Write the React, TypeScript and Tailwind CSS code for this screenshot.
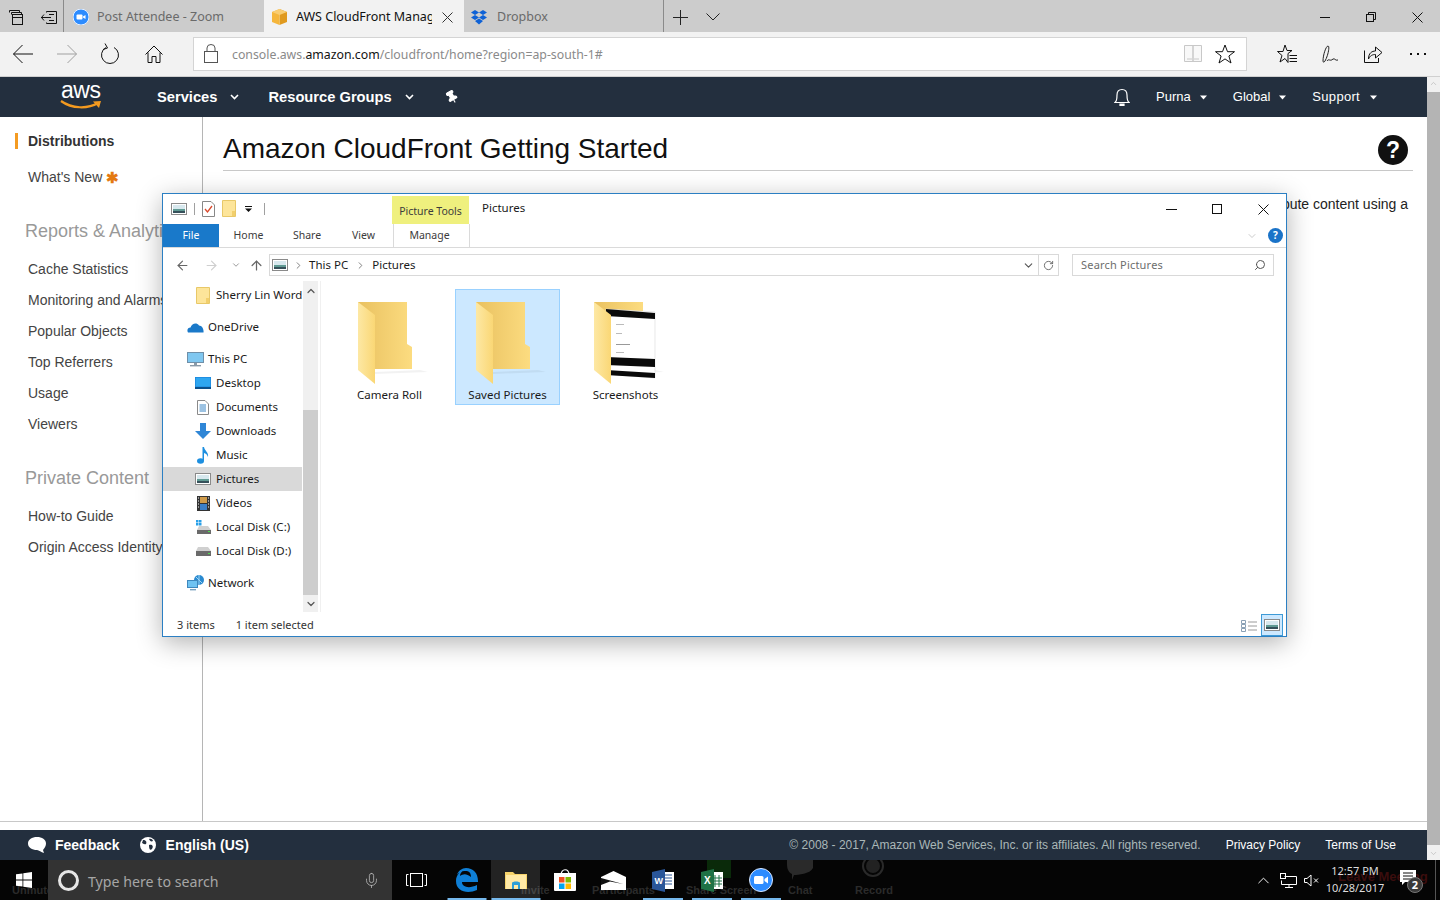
import React from "react";
import { ArrowLeft, ArrowRight, ArrowUp, RotateCw, ChevronDown, ChevronUp, ChevronRight, Search, Mic, Pin } from "lucide-react";

const seg = "font-['Noto_Sans','Open_Sans',sans-serif]";

function Cross({ s = 11, c = "#111" }: { s?: number; c?: string }) {
  return (
    <svg width={s} height={s} viewBox={`0 0 ${s} ${s}`} fill="none" stroke={c}><path d={`M0.5 0.5L${s - 0.5} ${s - 0.5}M${s - 0.5} 0.5L0.5 ${s - 0.5}`} /></svg>
  );
}

function Folder({ id, paper }: { id: string; paper?: boolean }) {
  return (
    <svg width="70" height="88" viewBox="0 0 70 88" className="block">
      <defs>
        <linearGradient id={id + "b"} x1="0" x2="1" y1="0" y2="0">
          <stop offset="0" stopColor="#e9c160" />
          <stop offset="1" stopColor="#fcdc80" />
        </linearGradient>
        <linearGradient id={id + "f"} x1="0" x2="1" y1="0" y2="0">
          <stop offset="0" stopColor="#fde8a4" />
          <stop offset="1" stopColor="#fad775" />
        </linearGradient>
      </defs>
      <polygon points="17,72 62,70 70,72 17,74" fill="#000" opacity="0.05" />
      {paper ? (
        <polygon points="0,2 49,2 49,12 0,12" fill={`url(#${id}b)`} />
      ) : (
        <polygon points="0,2 49,2 49,44 54,47 54,69 0,69" fill={`url(#${id}b)`} />
      )}
      {paper && (
        <g>
          <polygon points="12,9 61,12 61,78 12,74" fill="#fff" stroke="#d8d8d8" strokeWidth="0.6" />
          <polygon points="12,9 61,13 61,19 12,16" fill="#0a0a0a" />
          <polygon points="12,57 61,59 61,67 12,65" fill="#0a0a0a" />
          <polygon points="12,70 61,73 61,78 12,75" fill="#0a0a0a" />
          <rect x="22" y="24" width="8" height="1" fill="#bbb" />
          <rect x="22" y="33" width="6" height="1" fill="#bbb" />
          <rect x="22" y="44" width="14" height="1" fill="#999" />
          <rect x="22" y="52" width="8" height="1" fill="#bbb" />
        </g>
      )}
      <polygon points="0,2 17,15 17,84 0,70" fill={`url(#${id}f)`} />
    </svg>
  );
}

function PicIcon({ w = 16 }: { w?: number }) {
  return (
    <svg width={w} height="12" viewBox="0 0 16 12">
      <rect x="0.5" y="0.5" width="15" height="11" fill="#fff" stroke="#8a8a8a" />
      <rect x="2" y="2" width="12" height="4" fill="#d7e8ee" />
      <rect x="2" y="6" width="12" height="2" fill="#5f9a93" />
      <rect x="2" y="8" width="12" height="2" fill="#35505a" />
    </svg>
  );
}

function SmallFolder() {
  return (
    <svg width="14" height="17" viewBox="0 0 14 17">
      <path d="M0.5 0.5H13.5V16.5H0.5Z" fill="#fde59a" stroke="#e8c868" />
      <rect x="10" y="11" width="3" height="5" fill="#f2cf6c" />
    </svg>
  );
}

function NavIcon({ kind }: { kind: string }) {
  switch (kind) {
    case "folder":
      return <SmallFolder />;
    case "cloud":
      return (
        <svg width="17" height="11" viewBox="0 0 17 11">
          <path d="M1 10.5C-0.5 8 1 5.5 3.5 5.5C5 1.5 9.5 0 12 3.5C15 3.5 17 7 16.5 10.5Z" fill="#1a79c9" />
        </svg>
      );
    case "pc":
      return (
        <svg width="17" height="15" viewBox="0 0 17 15">
          <rect x="0.5" y="0.5" width="16" height="10" fill="#7fc7f0" stroke="#6f8fa8" />
          <rect x="7" y="11" width="3" height="2" fill="#8a9aa8" />
          <rect x="3" y="13" width="11" height="1.4" fill="#8a9aa8" />
        </svg>
      );
    case "desktop":
      return (
        <svg width="16" height="12" viewBox="0 0 16 12">
          <rect x="0" y="0" width="16" height="12" fill="#1a86dc" />
          <rect x="0.7" y="0.7" width="14.6" height="8.8" fill="#2ea6f0" />
          <rect x="0" y="10" width="16" height="2" fill="#0b4f8a" />
        </svg>
      );
    case "docs":
      return (
        <svg width="12" height="15" viewBox="0 0 12 15">
          <path d="M0.5 0.5H8L11.5 4V14.5H0.5Z" fill="#fff" stroke="#8a8a8a" />
          <path d="M2.5 5H9M2.5 7H9M2.5 9H9M2.5 11H9" stroke="#3b86c6" strokeWidth="1" />
        </svg>
      );
    case "down":
      return (
        <svg width="16" height="16" viewBox="0 0 16 16">
          <path d="M5 0H11V8H16L8 16L0 8H5Z" fill="#2f86d6" />
        </svg>
      );
    case "music":
      return (
        <svg width="12" height="17" viewBox="0 0 12 17">
          <ellipse cx="3.5" cy="14" rx="3.5" ry="2.8" fill="#1d8fe0" />
          <path d="M5.5 14V0H7C7.5 4 12 5 11 10C10 7 8.5 6.5 7 6V14Z" fill="#1d8fe0" />
        </svg>
      );
    case "pic":
      return <PicIcon />;
    case "video":
      return (
        <svg width="13" height="15" viewBox="0 0 13 15">
          <rect width="13" height="15" fill="#333" />
          <rect x="3" y="1" width="7" height="6" fill="#cf9b4a" />
          <rect x="3" y="8" width="7" height="6" fill="#3c7fc6" />
          <path d="M1 2H2M1 5H2M1 8H2M1 11H2M11 2H12M11 5H12M11 8H12M11 11H12" stroke="#fff" />
        </svg>
      );
    case "diskc":
      return (
        <svg width="15" height="14" viewBox="0 0 15 14">
          <rect x="0" y="0" width="2.5" height="2.5" fill="#29a0e8" />
          <rect x="3" y="0" width="2.5" height="2.5" fill="#29a0e8" />
          <rect x="0" y="3" width="2.5" height="2.5" fill="#29a0e8" />
          <rect x="3" y="3" width="2.5" height="2.5" fill="#29a0e8" />
          <path d="M3 6H12L15 10H1Z" fill="#d0d0d0" />
          <rect x="1" y="10" width="14" height="4" fill="#6a6a6a" />
          <rect x="12" y="11" width="2" height="1" fill="#4ee04e" />
        </svg>
      );
    case "diskd":
      return (
        <svg width="15" height="9" viewBox="0 0 15 9">
          <path d="M2 0H12L15 4H0Z" fill="#d0d0d0" />
          <rect x="0" y="4" width="15" height="5" fill="#6a6a6a" />
          <rect x="12" y="6" width="2" height="1" fill="#4ee04e" />
        </svg>
      );
    default:
      return (
        <svg width="17" height="16" viewBox="0 0 17 16">
          <circle cx="12" cy="5" r="5" fill="#2a8ad0" />
          <path d="M9 2L15 8M12 0V10" stroke="#9fd6f5" />
          <rect x="0.5" y="5.5" width="10" height="7" fill="#6fc3f2" stroke="#3f88bd" />
          <rect x="3" y="14" width="6" height="1.4" fill="#7aa3c0" />
        </svg>
      );
  }
}

function NavRow({ icon, label, indent, active }: { icon: string; label: string; indent?: boolean; active?: boolean }) {
  return (
    <div className={`h-6 mr-px flex items-center ${active ? "bg-[#d9d9d9]" : ""}`}>
      <div className={`flex justify-center shrink-0 ${indent ? "w-[50px] pl-[30px]" : "w-[42px] pl-[22px]"}`}>
        <NavIcon kind={icon} />
      </div>
      <span className="ml-[3px] text-[11.5px] whitespace-nowrap text-[#1a1a1a]">{label}</span>
    </div>
  );
}

function Tile({ label, selected, children }: { label: string; selected?: boolean; children: React.ReactNode }) {
  return (
    <div className={`w-[105px] h-[116px] border flex flex-col items-center ${selected ? "bg-[#cce8ff] border-[#99d1ff]" : "border-transparent"}`}>
      <div className="h-[90px] pt-[10px] w-full pl-[20px]">{children}</div>
      <span className="text-[11.5px] text-[#1a1a1a] mt-[6px] whitespace-nowrap">{label}</span>
    </div>
  );
}

function Explorer() {
  return (
    <div className={`${seg} absolute left-[162px] top-[193px] w-[1125px] h-[444px] bg-white border border-[#2b7fc3] shadow-[0_6px_24px_rgba(0,0,0,0.3)] flex flex-col`}>
      <div className="h-[30px] flex items-start relative">
        <div className="flex items-center gap-[7px] pl-[8px] pt-[6px] w-[229px]">
          <PicIcon />
          <div className="w-px h-[12px] bg-[#a0a0a0]" />
          <svg width="13" height="16" viewBox="0 0 13 16">
            <path d="M0.5 0.5H9L12.5 4V15.5H0.5Z" fill="#fff" stroke="#888" />
            <path d="M3 8L5.5 11L10 5" fill="none" stroke="#d9482b" strokeWidth="1.3" />
          </svg>
          <SmallFolder />
          <svg width="7" height="6" viewBox="0 0 7 6" className="ml-[2px]">
            <path d="M0 0H7V1H0ZM0 2.5H7L3.5 6Z" fill="#111" />
          </svg>
          <div className="w-px h-[12px] bg-[#a0a0a0] ml-[5px]" />
        </div>
        <div className="w-[77px] mt-[2px] bg-[#eff07e] h-[28px] flex items-center justify-center text-[10.5px] text-[#3c3c3c] pt-[3px]">Picture Tools</div>
        <div className="ml-[13px] mt-[5px] text-[11.5px] text-[#1a1a1a]">Pictures</div>
        <div className="ml-auto flex items-center">
          <div className="w-[46px] h-[30px] flex items-center justify-center"><div className="w-[11px] h-px bg-[#111]" /></div>
          <div className="w-[46px] h-[30px] flex items-center justify-center"><div className="w-[10px] h-[10px] border border-[#111]" /></div>
          <div className="w-[46px] h-[30px] flex items-center justify-center"><Cross s={11} /></div>
        </div>
      </div>
      <div className="h-[24px] flex items-stretch border-b border-[#dadada] text-[10.5px] text-[#3c3c3c]">
        <div className="w-[56px] bg-[#1979ca] text-white flex items-center justify-center">File</div>
        <div className="w-[57px] flex items-center justify-center ml-[1px]">Home</div>
        <div className="w-[60px] flex items-center justify-center">Share</div>
        <div className="w-[53px] flex items-center justify-center">View</div>
        <div className="w-[77px] ml-[3px] flex items-center justify-center border-x border-[#dadada] pr-[4px]">Manage</div>
        <div className="ml-auto flex items-center pr-[3px] gap-[10px]">
          <ChevronDown size={12} color="#a8a8a8" strokeWidth={1.2} />
          <div className="w-[15px] h-[15px] rounded-full bg-[#1a73c8] text-white text-[10px] font-bold flex items-center justify-center">?</div>
        </div>
      </div>
      <div className="h-[34px] flex items-center">
        <div className="w-[107px] flex items-center pl-[12px] shrink-0">
          <ArrowLeft size={15} color="#666" strokeWidth={1.8} />
          <ArrowRight size={15} color="#cfcfcf" strokeWidth={1.8} className="ml-[14px]" />
          <ChevronDown size={10} color="#888" strokeWidth={2} className="ml-[12px]" />
          <ArrowUp size={15} color="#666" strokeWidth={2} className="ml-[8px]" />
        </div>
        <div className="w-[790px] h-[22px] border border-[#d9d9d9] flex items-center pl-[2px] -ml-[1px] text-[#1a1a1a] text-[11.5px] shrink-0">
          <PicIcon />
          <ChevronRight size={11} color="#777" className="ml-[5px]" />
          <span className="ml-[5px]">This PC</span>
          <ChevronRight size={11} color="#777" className="ml-[7px]" />
          <span className="ml-[6px]">Pictures</span>
          <ChevronDown size={13} color="#555" className="ml-auto mr-[3px]" />
          <div className="w-px h-full bg-[#d9d9d9]" />
          <div className="w-[19px] flex justify-center"><RotateCw size={11} color="#666" /></div>
        </div>
        <div className="w-[202px] h-[22px] ml-[13px] border border-[#d9d9d9] flex items-center pl-[8px] pr-[7px] text-[11px] text-[#6d6d6d] shrink-0">
          <span className="tracking-[0.2px]">Search Pictures</span>
          <Search size={12} color="#555" className="ml-auto -scale-x-100" />
        </div>
      </div>
      <div className="flex-1 flex min-h-0">
        <div className="w-[140px] shrink-0 pt-px">
          <NavRow icon="folder" label="Sherry Lin Word" indent />
          <div className="h-2" />
          <NavRow icon="cloud" label="OneDrive" />
          <div className="h-2" />
          <NavRow icon="pc" label="This PC" />
          <NavRow icon="desktop" label="Desktop" indent />
          <NavRow icon="docs" label="Documents" indent />
          <NavRow icon="down" label="Downloads" indent />
          <NavRow icon="music" label="Music" indent />
          <NavRow icon="pic" label="Pictures" indent active />
          <NavRow icon="video" label="Videos" indent />
          <NavRow icon="diskc" label="Local Disk (C:)" indent />
          <NavRow icon="diskd" label="Local Disk (D:)" indent />
          <div className="h-2" />
          <NavRow icon="net" label="Network" />
        </div>
        <div className="w-[15px] h-[331px] bg-[#f0f0f0] flex flex-col items-center shrink-0 mt-[-1px]">
          <ChevronUp size={12} color="#555" strokeWidth={2.4} className="mt-[4px]" />
          <div className="w-full h-[185px] bg-[#cdcdcd] mt-[113px]" />
          <ChevronDown size={12} color="#555" strokeWidth={2.4} className="mt-[3px]" />
        </div>
        <div className="w-px h-[331px] bg-[#f0f0f0] ml-[2px] mt-[-1px]" />
        <div className="flex gap-[13px] pl-[16px] pt-[7px] items-start">
          <Tile label="Camera Roll"><Folder id="a" /></Tile>
          <Tile label="Saved Pictures" selected><Folder id="b" /></Tile>
          <Tile label="Screenshots"><Folder id="c" paper /></Tile>
        </div>
      </div>
      <div className="h-[22px] flex items-center text-[11px] text-[#333] pl-[14px]">
        <span>3 items</span>
        <span className="ml-[21px]">1 item selected</span>
        <div className="ml-auto flex items-center pr-[3px]">
          <svg width="17" height="13" viewBox="0 0 17 13" className="mr-[3px]">
            <path d="M0.5 1.5H4.5V4.5H0.5ZM0.5 5.5H4.5V8.5H0.5ZM0.5 9.5H4.5V12.5H0.5Z" fill="none" stroke="#8aa0b5" />
            <path d="M7 3H16M7 7H16M7 11H16" stroke="#9a9a9a" />
          </svg>
          <div className="w-[22px] h-[22px] bg-[#cce8ff] border border-[#3e9ad6] flex items-center justify-center"><PicIcon /></div>
        </div>
      </div>
    </div>
  );
}

const reports = ["Cache Statistics", "Monitoring and Alarms", "Popular Objects", "Top Referrers", "Usage", "Viewers"];

function Sidebar() {
  return (
    <div className="w-[203px] shrink-0 border-r border-[#b5b5b5] text-[14px] text-[#444] pt-[16px]">
      <div className="flex items-center h-[16px]">
        <div className="w-[3px] h-[16px] bg-[#f49b22] ml-[15px]" />
        <span className="ml-[10px] font-bold text-[#333]">Distributions</span>
      </div>
      <div className="pl-[28px] mt-[20px] h-[16px] flex items-center">
        What's New <span className="ml-[4px] text-[#e47911] text-[15px] leading-none font-bold">✱</span>
      </div>
      <div className="pl-[25px] mt-[34px] text-[18px] text-[#999] h-[24px] leading-[24px] whitespace-nowrap">Reports &amp; Analytics</div>
      <div className="pl-[28px] mt-[11px] flex flex-col">
        {reports.map((r) => (
          <div key={r} className="h-[31px] flex items-center whitespace-nowrap">{r}</div>
        ))}
      </div>
      <div className="pl-[25px] mt-[26px] text-[18px] text-[#999] h-[24px] leading-[24px]">Private Content</div>
      <div className="pl-[28px] mt-[11px] flex flex-col">
        <div className="h-[31px] flex items-center whitespace-nowrap">How-to Guide</div>
        <div className="h-[31px] flex items-center whitespace-nowrap">Origin Access Identity</div>
      </div>
    </div>
  );
}

function Chevron() {
  return (
    <svg width="9" height="6" viewBox="0 0 9 6"><path d="M1 1L4.5 4.5L8 1" fill="none" stroke="#fff" strokeWidth="1.6" /></svg>
  );
}
function Caret() {
  return (
    <svg width="7" height="5" viewBox="0 0 7 5"><path d="M0 0.5H7L3.5 4.5Z" fill="#fff" /></svg>
  );
}

const starPath = "M10 1L12.5 7.7H19.5L13.9 12L16 19L10 14.9L4 19L6.1 12L0.5 7.7H7.5Z";

function TopBars() {
  return (
    <div className={seg}>
      <div className="h-[32px] bg-[#cccccc] flex items-stretch">
        <div className="w-[64px] flex items-center pl-[8px] pt-[2px] gap-[17px] border-r border-[#8a8a8a] shrink-0">
          <svg width="15" height="15" viewBox="0 0 15 15" fill="none" stroke="#111" className="ml-[1px]"><path d="M0.5 2.5V0.5H10.5V2.5M2.5 4.5V2.5H12.5V4.5" /><rect x="3.5" y="4.5" width="10" height="10" /><path d="M3.5 7.5H13.5" /></svg>
          <svg width="16" height="13" viewBox="0 0 16 13" fill="none" stroke="#111"><path d="M5.5 1.5V0.5H15.5V12.5H5.5V11.5M0 6.5H10M3 3.5L0.5 6.5L3 9.5M8 3.5H13M8 9.5H13" /></svg>
        </div>
        <div className="w-[200px] flex items-center pl-[9px] pt-[2px] shrink-0 text-[12.5px] text-[#6a6a6a]">
          <svg width="16" height="16" viewBox="0 0 16 16"><circle cx="8" cy="8" r="8" fill="#2d8cff" stroke="#e8f1ff" /><rect x="3.5" y="5.5" width="6" height="5" rx="1" fill="#fff" /><path d="M10 7.5L12.5 6V10L10 8.5Z" fill="#fff" /></svg>
          <span className="ml-[8px]">Post Attendee - Zoom</span>
        </div>
        <div className="w-[200px] flex items-center pl-[8px] pt-[2px] shrink-0 bg-[#f2f2f2] text-[12.5px] text-[#111]">
          <svg width="15" height="16" viewBox="0 0 15 16"><path d="M7.5 0L15 3V13L7.5 16Z" fill="#e09a1f" /><path d="M7.5 0L0 3V13L7.5 16Z" fill="#f5b63c" /><path d="M0 3L7.5 6L15 3L7.5 0Z" fill="#f9cd72" /></svg>
          <span className="ml-[9px] w-[136px] overflow-hidden whitespace-nowrap">AWS CloudFront Management Console</span>
          <span className="ml-[10px]"><Cross s={11} c="#333" /></span>
        </div>
        <div className="w-[200px] flex items-center pl-[7px] pt-[2px] shrink-0 border-r border-[#8a8a8a] text-[12.5px] text-[#6a6a6a]">
          <svg width="16" height="15" viewBox="0 0 16 15" fill="#0f62d6"><path d="M4 0L8 2.5L4 5L0 2.5ZM12 0L16 2.5L12 5L8 2.5ZM4 5L8 7.5L4 10L0 7.5ZM12 5L16 7.5L12 10L8 7.5ZM8 8.5L12 11L8 14.5L4 11Z" /></svg>
          <span className="ml-[10px]">Dropbox</span>
        </div>
        <div className="flex items-center pl-[9px] pt-[2px] gap-[18px]">
          <svg width="15" height="15" viewBox="0 0 15 15" stroke="#222" fill="none"><path d="M7.5 0V15M0 7.5H15" /></svg>
          <svg width="14" height="8" viewBox="0 0 14 8" stroke="#222" fill="none"><path d="M0.5 0.5L7 7L13.5 0.5" /></svg>
        </div>
        <div className="ml-auto flex items-center pt-[2px]">
          <div className="w-[46px] flex justify-center"><div className="w-[10px] h-px bg-[#111]" /></div>
          <div className="w-[46px] flex justify-center">
            <svg width="10" height="10" viewBox="0 0 10 10" fill="none" stroke="#111"><rect x="0.5" y="2.5" width="7" height="7" /><path d="M2.5 2.5V0.5H9.5V7.5H7.5" /></svg>
          </div>
          <div className="w-[46px] flex justify-center"><Cross s={11} /></div>
        </div>
      </div>
      <div className="h-[45px] bg-[#f2f2f2] border-b border-[#d0d0d0] flex items-center">
        <div className="w-[193px] flex items-center pl-[12px] shrink-0">
          <svg width="22" height="22" viewBox="0 0 22 22" fill="none" stroke="#111"><path d="M21 11H1.5M10.5 2L1.5 11L10.5 20" /></svg>
          <svg width="22" height="22" viewBox="0 0 22 22" fill="none" stroke="#a0a0a0" className="ml-[22px]"><path d="M1 11H20.5M11.5 2L20.5 11L11.5 20" /></svg>
          <svg width="20" height="22" viewBox="0 0 20 22" fill="none" stroke="#111" className="ml-[22px]"><path d="M6 4.5A8.5 8.5 0 1 0 14 4.5" /><path d="M5 0.5L7.5 5L3 6.5" /></svg>
          <svg width="18" height="18" viewBox="0 0 18 18" fill="none" stroke="#111" className="ml-[25px]"><path d="M0.5 9.5L9 1L17.5 9.5M3 7.5V17.5H7V11.5H11V17.5H15V7.5" /></svg>
        </div>
        <div className="w-[1054px] h-[34px] bg-white border border-[#d4d4d4] flex items-center -mt-px shrink-0">
          <svg width="14" height="19" viewBox="0 0 14 19" fill="none" stroke="#555" className="ml-[10px]"><rect x="0.5" y="7.5" width="13" height="11" /><path d="M3 7.5V4A4 3.5 0 0 1 11 4V7.5" /></svg>
          <span className="ml-[14px] pt-[4px] text-[12.3px] text-[#8a8a8a] whitespace-nowrap">console.aws.<span className="text-[#111]">amazon.com</span>/cloudfront/home?region=ap-south-1#</span>
          <svg width="18" height="19" viewBox="0 0 18 19" fill="#f8f8f8" stroke="#c8c8c8" className="ml-auto"><path d="M0.5 1.5H9V17.5H0.5ZM9 1.5H17.5V17.5H9Z" /><path d="M3 15H8M10 15H15" /></svg>
          <svg width="20" height="20" viewBox="0 0 20 20" fill="none" stroke="#111" className="ml-[13px] mr-[11px]"><path d={starPath} /></svg>
        </div>
        <div className="flex items-center pl-[30px]">
          <svg width="20" height="20" viewBox="0 0 20 20" fill="none" stroke="#111"><path d="M8 1L10 6.5H15L11 9.5V18.5L8 14.5L3 18L5 11.5L0.5 7.5H6Z" /><path d="M12.5 11.5H20M12.5 14.5H20M12.5 17.5H20" /></svg>
          <svg width="20" height="20" viewBox="0 0 20 20" fill="none" stroke="#222" className="ml-[23px]"><path d="M3 17C3 11 6 2 8 2C10 2 8 12 5 17C4 18.5 3 18.5 3 17ZM7 17C9 14 10 18 13 15C15 14 15 17 18 16" /></svg>
          <svg width="20" height="20" viewBox="0 0 20 20" fill="none" stroke="#111" className="ml-[23px]"><path d="M1.5 6.5V18.5H15.5V14M1 18.5" /><path d="M5.5 15C5.5 9 9 7 12.5 7V3L19 8.5L12.5 14V10.5C9.5 10.5 7 11.5 5.5 15Z" /></svg>
          <svg width="16" height="4" viewBox="0 0 16 4" fill="#111" className="ml-[27px]"><rect x="0" y="1" width="2" height="2" /><rect x="7" y="1" width="2" height="2" /><rect x="14" y="1" width="2" height="2" /></svg>
        </div>
      </div>
    </div>
  );
}

function AwsNav() {
  return (
    <div className="h-[40px] bg-[#232f3e] flex items-center text-white shrink-0">
      <div className="w-[157px] shrink-0 relative h-full">
        <span className="absolute left-[61px] top-[-1px] text-[23px] leading-[28px] tracking-[-0.5px]">aws</span>
        <svg width="42" height="11" viewBox="0 0 42 11" className="absolute left-[60px] top-[23px]">
          <path d="M1 1C12 9 28 9 38 3" fill="none" stroke="#f39a20" strokeWidth="2.2" />
          <path d="M33 1.5L41 1L39 8Z" fill="#f39a20" />
        </svg>
      </div>
      <span className="text-[14.7px] font-bold">Services</span>
      <span className="ml-[13px]"><Chevron /></span>
      <span className="ml-[29px] text-[14.7px] font-bold">Resource Groups</span>
      <span className="ml-[13px]"><Chevron /></span>
      <Pin size={14} fill="#fff" color="#fff" className="ml-[31px] -rotate-30" />
      <div className="ml-auto flex items-center text-[13px] pr-[50px]">
        <Bell />
        <span className="ml-[26px]">Purna</span>
        <span className="ml-[9px]"><Caret /></span>
        <span className="ml-[26px]">Global</span>
        <span className="ml-[9px]"><Caret /></span>
        <span className="ml-[26px] tracking-[0.3px]">Support</span>
        <span className="ml-[10px]"><Caret /></span>
      </div>
    </div>
  );
}

function Bell() {
  return (
    <svg width="16" height="18" viewBox="0 0 16 18" fill="none" stroke="#fff" strokeWidth="1.2"><path d="M1 14.5C3 13 3 10 3 7C3 3.5 5 1.5 8 1.5C11 1.5 13 3.5 13 7C13 10 13 13 15 14.5Z" /><path d="M6 16H10V17.5H6Z" fill="#fff" /></svg>
  );
}

function Footer() {
  return (
    <div className="h-[30px] bg-[#232f3e] flex items-center shrink-0 text-white">
      <svg width="18" height="16" viewBox="0 0 18 16" className="ml-[28px]"><path d="M9 0C14 0 18 2.5 18 6.5C18 10 15 13 15 13L16 16C13 15.5 11 13 9 13C4 13 0 10.5 0 6.5C0 2.5 4 0 9 0Z" fill="#fff" /></svg>
      <span className="ml-[9px] text-[14px] font-bold">Feedback</span>
      <svg width="16" height="16" viewBox="0 0 16 16" className="ml-[20px]"><circle cx="8" cy="8" r="8" fill="#fff" /><path d="M3 3C6 3 7 5 6 7C4 8 3 6 2 6ZM9 8C12 7 14 9 12 12C10 14 9 12 9 8ZM9 2C11 1 13 3 13 4C11 5 10 4 9 2Z" fill="#232f3e" /></svg>
      <span className="ml-[10px] text-[14px] font-bold">English (US)</span>
      <span className="ml-auto text-[12px] text-[#aab7b8]">© 2008 - 2017, Amazon Web Services, Inc. or its affiliates. All rights reserved.</span>
      <span className="ml-[25px] text-[12px]">Privacy Policy</span>
      <span className="ml-[25px] mr-[31px] text-[12px]">Terms of Use</span>
    </div>
  );
}

function ScrollRail() {
  return (
    <div className="w-[13px] bg-[#f0f0f0] flex flex-col items-center shrink-0">
      <ChevronUp size={9} color="#bbb" className="mt-[2px]" />
      <div className="w-full flex-1 bg-[#b4b4b4] mt-[4px] mb-[4px]" />
      <ChevronDown size={9} color="#bbb" className="mb-[2px]" />
    </div>
  );
}

function TaskIcon({ children, underline, active }: { children: React.ReactNode; underline?: string; active?: boolean }) {
  return (
    <div className={`w-[49px] h-full relative flex items-center justify-center shrink-0 ${active ? "bg-[#ffffff1f]" : ""}`}>
      {children}
      {underline && <div className={`absolute bottom-0 left-1/2 -translate-x-1/2 h-[2px] bg-[#76b9ed] ${underline}`} />}
    </div>
  );
}

function Taskbar() {
  return (
    <div className={`${seg} h-[40px] bg-[#050505] flex items-stretch relative shrink-0 text-white`}>
      <div className="absolute inset-0 text-[11px] font-['Liberation_Sans',sans-serif] font-bold">
        <span className="absolute left-[12px] top-[22px] text-[#2b2b2b]">Unmute</span>
        <span className="absolute left-[521px] top-[22px] text-[#2b2b2b]">Invite</span>
        <span className="absolute left-[592px] top-[22px] text-[#2b2b2b]">Participants</span>
        <span className="absolute left-[686px] top-[22px] text-[#2b2b2b]">Share Screen</span>
        <span className="absolute left-[788px] top-[22px] text-[#2b2b2b]">Chat</span>
        <span className="absolute left-[855px] top-[22px] text-[#2b2b2b]">Record</span>
        <span className="absolute left-[1338px] top-[7px] text-[13px] text-[#3b0d0d]">Leave Meeting</span>
        <svg width="28" height="22" viewBox="0 0 28 22" className="absolute left-[786px] top-0"><path d="M1 0H27V8C24 14 12 15 8 15L6 20V14C2 12 1 8 1 4Z" fill="#2a2a2a" /></svg>
        <svg width="24" height="18" viewBox="0 0 24 18" className="absolute left-[861px] top-0"><circle cx="12" cy="6" r="10" fill="none" stroke="#2a2a2a" strokeWidth="2" /><circle cx="12" cy="6" r="7" fill="#222" /></svg>
        <div className="absolute left-[707px] top-0 w-[24px] h-[18px] bg-[#0a2a0a]" />
      </div>
      <div className="w-[48px] flex items-center justify-center relative shrink-0">
        <svg width="16" height="16" viewBox="0 0 16 16" fill="#fff"><path d="M0 2.3L6.5 1.4V7.6H0ZM7.3 1.3L16 0V7.6H7.3ZM0 8.4H6.5V14.6L0 13.7ZM7.3 8.4H16V16L7.3 14.7Z" /></svg>
      </div>
      <div className="w-[344px] bg-[#333333] flex items-center relative shrink-0">
        <div className="w-[21px] h-[21px] rounded-full border-[3px] border-[#e6e6e6] ml-[10px]" />
        <span className="ml-[9px] pt-[3px] text-[14.2px] text-[#a6a6a6]">Type here to search</span>
        <Mic size={17} strokeWidth={1} color="#ccc" className="ml-auto mr-[12px]" />
      </div>
      <div className="w-[50px] flex items-center pl-[14px] relative shrink-0">
        <svg width="21" height="14" viewBox="0 0 21 14" fill="none" stroke="#fff"><rect x="4.5" y="0.5" width="12" height="13" /><path d="M2.5 1.5H0.5V12.5H2.5M18.5 1.5H20.5V12.5H18.5" /></svg>
      </div>
      <TaskIcon underline="w-[39px]">
        <svg width="23" height="24" viewBox="0 0 23 24"><path d="M11 0C18 0 23 5 23 13V14H7C7 19 14 21 22 17V22C13 26 1 24 1 13C1 7 5 3 9 2C6 4 5 6 5 8C8 6 11 5 16 9C16 5 14 3 11 3C6 3 3 5 2 7C3 3 7 0 11 0Z" fill="#0f7fd6" /></svg>
      </TaskIcon>
      <TaskIcon active underline="w-[49px]">
        <svg width="22" height="20" viewBox="0 0 22 20"><path d="M0 2H8L10 4H22V19H0Z" fill="#f6d36b" /><rect x="1" y="5" width="20" height="14" fill="#ffe9a6" /><path d="M7 19V13C7 11 15 11 15 13V19H13V15H9V19Z" fill="#2d9fd8" /></svg>
      </TaskIcon>
      <TaskIcon>
        <svg width="24" height="24" viewBox="0 0 24 24"><path d="M8 7C8 0 16 0 16 7" fill="none" stroke="#fff" strokeWidth="1.2" /><path d="M1 5H23V22Q23 23 22 23H2Q1 23 1 22Z" fill="#fff" /><rect x="6" y="9" width="5.5" height="5.5" fill="#f25022" /><rect x="12.5" y="9" width="5.5" height="5.5" fill="#7fba00" /><rect x="6" y="15.5" width="5.5" height="5.5" fill="#00a4ef" /><rect x="12.5" y="15.5" width="5.5" height="5.5" fill="#ffb900" /></svg>
      </TaskIcon>
      <TaskIcon>
        <svg width="25" height="19" viewBox="0 0 25 19"><path d="M12.5 0L25 6V19H0V6Z" fill="#fff" /><path d="M0 7L22 13L9 10.5L0 14Z" fill="#111" /></svg>
      </TaskIcon>
      <TaskIcon underline="w-[40px]">
        <svg width="22" height="23" viewBox="0 0 22 23"><rect x="8" y="3" width="14" height="17" fill="#fff" /><path d="M11 6H20M11 9H20M11 12H20M11 15H20" stroke="#2a5699" /><path d="M0 3L13 0V23L0 20Z" fill="#2a5699" /><text x="2.5" y="15" fontSize="9" fontWeight="700" fill="#fff" fontFamily="Liberation Sans">W</text></svg>
      </TaskIcon>
      <TaskIcon underline="w-[40px]">
        <svg width="22" height="23" viewBox="0 0 22 23"><rect x="8" y="3" width="14" height="17" fill="#fff" /><path d="M14 6V18M18 6V18M10 9H21M10 12H21M10 15H21" stroke="#1f7246" /><path d="M0 3L13 0V23L0 20Z" fill="#1f7246" /><text x="3" y="15" fontSize="10" fontWeight="700" fill="#fff" fontFamily="Liberation Sans">X</text></svg>
      </TaskIcon>
      <TaskIcon underline="w-[40px]">
        <svg width="24" height="24" viewBox="0 0 24 24"><circle cx="12" cy="12" r="11.5" fill="#2d8cff" stroke="#dbe9ff" /><rect x="5" y="8" width="9.5" height="8" rx="1.5" fill="#fff" /><path d="M15.5 11L19 8.5V15.5L15.5 13Z" fill="#fff" /></svg>
      </TaskIcon>
      <div className="ml-auto flex items-center relative pr-[14px]">
        <ChevronUp size={19} strokeWidth={1.2} color="#fff" />
        <svg width="17" height="15" viewBox="0 0 17 15" fill="none" stroke="#fff" className="ml-[7px]"><path d="M4.5 3.5H16.5V11.5H1.5V7.5M9 11.5V14M5 14.5H13" /><rect x="0.5" y="0.5" width="5" height="5" /></svg>
        <svg width="15" height="13" viewBox="0 0 15 13" fill="none" stroke="#fff" className="ml-[7px]"><path d="M0.5 4.5H3L7 1V12L3 8.5H0.5ZM10 4.5L14 8.5M14 4.5L10 8.5" /></svg>
        <div className="ml-[6px] w-[60px] flex flex-col items-center text-[11px] leading-[17px] text-[#ddd] -mt-[2px]">
          <span>12:57 PM</span>
          <span>10/28/2017</span>
        </div>
        <div className="relative w-[30px] h-[30px] ml-[11px]">
          <svg width="16" height="15" viewBox="0 0 16 15" className="absolute left-[4px] top-[5px]"><path d="M0 0H16V12H5L2 15V12H0Z" fill="#fff" /><path d="M3 3H13M3 6H13M3 9H13" stroke="#111" /></svg>
          <div className="absolute left-[11px] top-[12px] w-[16px] h-[16px] rounded-full bg-[#3a3a3a] border border-[#777] text-[11px] font-bold flex items-center justify-center">2</div>
        </div>
        <div className="absolute right-[4px] top-0 h-full w-px bg-[#555]" />
      </div>
    </div>
  );
}

export default function App() {
  return (
    <div className="w-[1440px] h-[900px] relative overflow-hidden flex flex-col bg-white font-['Liberation_Sans',Arial,sans-serif]">
      <TopBars />
      <div className="flex-1 flex min-h-0">
        <div className="flex-1 flex flex-col min-w-0">
          <AwsNav />
          <div className="flex-1 flex min-h-0 border-b border-[#c8c8c8] overflow-hidden">
            <Sidebar />
            <div className="flex-1 pl-[20px] pr-[14px] pt-[14px] min-w-0">
              <div className="h-[40px] border-b border-[#c8c8c8] flex items-start justify-between">
                <h1 className="text-[28px] leading-[36px] text-[#111]">Amazon CloudFront Getting Started</h1>
                <div className="w-[30px] h-[30px] rounded-full bg-[#111] text-white text-[23px] font-bold flex items-center justify-center mt-[4px] mr-[5px]">?</div>
              </div>
              <p className="text-[14px] text-[#222] text-right pr-[5px] mt-[23px] whitespace-nowrap">Amazon CloudFront is a web service that makes it easy to distribute content using a</p>
            </div>
          </div>
          <div className="h-[8px] bg-white shrink-0" />
          <Footer />
        </div>
        <ScrollRail />
      </div>
      <Taskbar />
      <Explorer />
    </div>
  );
}
